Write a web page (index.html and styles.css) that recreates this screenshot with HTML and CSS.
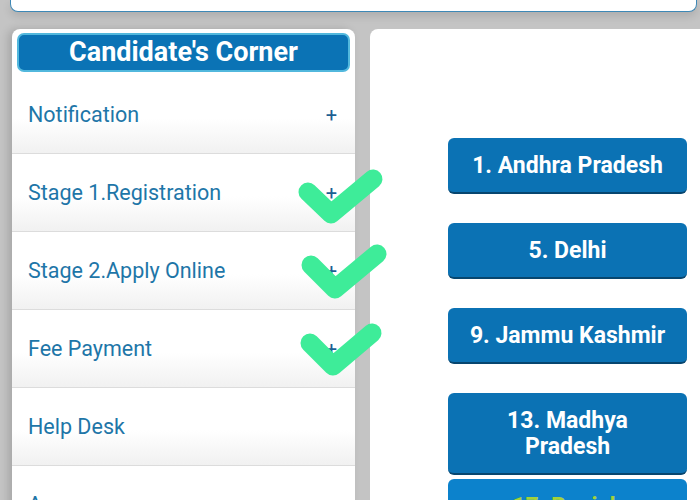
FILE: index.html
```html
<!DOCTYPE html>
<html lang="en">
<head>
    <meta charset="UTF-8">
    <meta name="viewport" content="width=device-width, initial-scale=1.0">
    <title>Candidate's Corner</title>
    <link rel="stylesheet" href="styles.css">
</head>
<body>
    <div class="topbar"></div>

    <div class="main">
        <div class="sidebar">
            <div class="sidebar-title">Candidate's Corner</div>
            <ul class="menu">
                <li class="menu-item"><span>Notification</span><span class="plus">+</span></li>
                <li class="menu-item"><span>Stage 1.Registration</span><span class="plus">+</span></li>
                <li class="menu-item"><span>Stage 2.Apply Online</span><span class="plus">+</span></li>
                <li class="menu-item"><span>Fee Payment</span><span class="plus">+</span></li>
                <li class="menu-item"><span>Help Desk</span></li>
                <li class="menu-item"><span>Annexures</span><span class="plus">+</span></li>
            </ul>
        </div>

        <div class="content">
            <div class="states">
                <a class="state-btn">1. Andhra Pradesh</a>
                <a class="state-btn">5. Delhi</a>
                <a class="state-btn">9. Jammu Kashmir</a>
                <a class="state-btn">13. Madhya<br>Pradesh</a>
                <a class="state-btn state-btn-active">17. Punjab</a>
            </div>
        </div>
    </div>

    <!-- hand drawn ticks on top of the screenshot -->
    <svg class="ticks" width="700" height="500" viewBox="0 0 700 500">
        <g fill="none" stroke="#3eec99" stroke-width="19" stroke-linecap="round" stroke-linejoin="round">
            <path d="M308 192 L331 214 L373 179"/>
            <path d="M311 265 L335 289 L377 254"/>
            <path d="M310 343 L333 366 L372 333"/>
        </g>
    </svg>
</body>
</html>
```

FILE: styles.css
```css
body {
    font-family: Roboto, "Liberation Sans", sans-serif;
    background-color: #c4c4c4;
    margin: 0;
    padding: 0;
    height: 500px;
    overflow: hidden;
    position: relative;
}

.topbar {
    height: 11px;
    margin: 0 3px 0 10px;
    background-color: #fff;
    border: 1px solid #3d88b6;
    border-top: none;
    border-radius: 0 0 8px 8px;
    box-shadow: 0 4px 8px rgba(0, 0, 0, 0.12);
}

.main {
    display: flex;
    gap: 15px;
    margin-top: 17px;
    padding-left: 12px;
}

.sidebar {
    width: 343px;
    flex-shrink: 0;
    background-color: #fff;
    border-radius: 8px 8px 0 0;
    padding-top: 4px;
    box-shadow: -4px 0 8px rgba(0, 0, 0, 0.15);
}

.sidebar-title {
    margin: 0 5px;
    height: 35px;
    line-height: 35px;
    background-color: #0b73b5;
    border: 2px solid #52b8dd;
    border-radius: 7px;
    color: #fff;
    font-size: 27px;
    font-weight: bold;
    text-align: center;
}

.menu {
    list-style: none;
    margin: 4px 0 0 0;
    padding: 0;
}

.menu-item {
    display: flex;
    justify-content: space-between;
    align-items: center;
    height: 77px;
    padding: 0 16px;
    border-bottom: 1px solid #dcdcdc;
    background: linear-gradient(#ffffff 55%, #f1f1f1);
    color: #1e76a8;
    font-size: 21.5px;
}

.plus {
    color: #1d5f93;
    font-size: 20px;
    margin-right: 2px;
}

.content {
    flex: 1;
    background-color: #fff;
    border-radius: 8px 0 0 0;
    padding: 109px 0 0 78px;
    height: 400px;
}

.states {
    display: flex;
    flex-direction: column;
    gap: 29px;
    width: 239px;
}

.state-btn {
    display: block;
    padding: 15px 4px 13px;
    line-height: 26px;
    background-color: #0b72b4;
    border-bottom: 2px solid #07466f;
    border-radius: 6px;
    color: #fff;
    font-size: 23px;
    font-weight: bold;
    text-align: center;
}

.state-btn-active {
    margin-top: -25px;
    background-color: #0c82cc;
    color: #a3d13a;
}

.ticks {
    position: absolute;
    top: 0;
    left: 0;
}
```
